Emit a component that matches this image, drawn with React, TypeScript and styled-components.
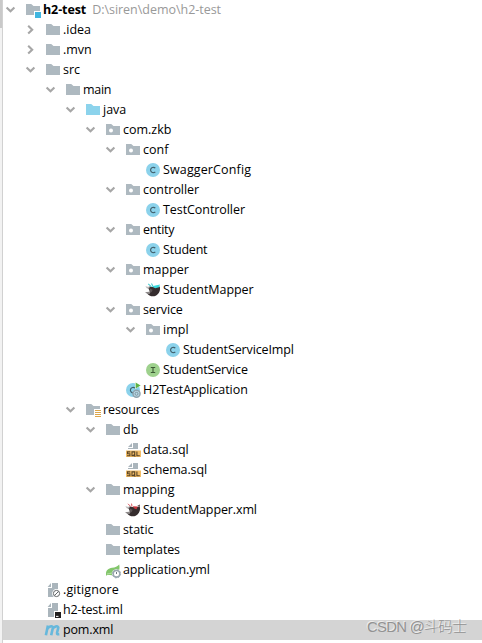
import React from "react";
import styled, { createGlobalStyle } from "styled-components";

const GlobalStyle = createGlobalStyle`
  * { box-sizing: border-box; }
  body { margin: 0; background: #fff; overflow: hidden; }
`;

const Panel = styled.div`
  position: relative;
  display: flex;
  width: 482px;
  height: 643px;
  overflow: hidden;
  background: #fff;
  color: #000;
  font-family: "Open Sans", "Noto Sans CJK SC", sans-serif;
  font-size: 12.5px;
`;

const Gutter = styled.div`
  flex: none;
  width: 3px;
  background: #f2f2f2;
  border-right: 1px solid #d1d1d1;
`;

const GutterThumb = styled.div`
  height: 28px;
  background: #c9c9c9;
`;

const Tree = styled.div`
  flex: 1;
  display: flex;
  flex-direction: column;
`;

const Row = styled.div<{ $depth: number; $selected?: boolean }>`
  display: flex;
  align-items: center;
  flex: none;
  height: 20px;
  padding-left: ${(p) => p.$depth * 20}px;
  background: ${(p) => (p.$selected ? "#d4d4d4" : "transparent")};
`;

const Toggle = styled.span`
  flex: none;
  width: 22px;
  height: 20px;
  svg { display: block; }
`;

const IconBox = styled.span`
  flex: none;
  width: 18px;
  height: 16px;
  svg { display: block; overflow: visible; }
`;

const Label = styled.span<{ $root?: boolean; $tracking: number }>`
  line-height: 20px;
  height: 20px;
  white-space: pre;
  font-weight: ${(p) => (p.$root ? 700 : 400)};
  letter-spacing: ${(p) => p.$tracking}px;
`;

const Path = styled.span`
  margin-left: 6px;
  line-height: 20px;
  height: 20px;
  color: #999;
  white-space: pre;
  letter-spacing: -0.03px;
`;

const Watermark = styled.div`
  position: absolute;
  left: 367px;
  top: 615px;
  line-height: 24px;
  font-family: "Liberation Sans", "Noto Sans CJK SC", sans-serif;
  font-size: 14.8px;
  font-weight: 300;
  letter-spacing: -0.65px;
  white-space: nowrap;
  color: #929292;
  text-shadow: -1px -1px 0 rgba(255, 255, 255, 0.6);
`;

const Chevron = ({ open }: { open: boolean }) => (
  <svg width="22" height="20" fill="none" stroke="#a6a6a6" strokeWidth="2.1">
    <path d={open ? "M3.6 7.4 7.5 11.2 11.4 7.4" : "M5.2 5.8 9.2 9.7 5.2 13.6"} />
  </svg>
);

type Kind =
  | "module" | "folder" | "source" | "package" | "class" | "interface" | "app"
  | "mapper" | "mapperXml" | "resources" | "sql" | "spring" | "ignore" | "iml" | "maven";

const folderShape = "M1 2H6.2L8.5 4H15V13H1Z";

const BirdBody = () => (
  <>
    <path d="M2 5.2 5.2 4.6C8 5.6 11 5.6 14.7 4.6 15.8 8 14.2 12 10.7 13.8 7.2 15.3 3.6 13.5 2 11.4L4.8 10.2C4.8 8.4 4 6.8 2 5.2Z" fill="#352d2e" />
    <path d="M0 10.2 5.8 9.4 4.6 12 2.2 11.8Z" fill="#8c8888" />
    <path d="M.4 4.2 4.8 5.3 4 6.8 1.8 6.3Z" fill="#b9b6b6" />
    <path d="M4.8 6.5 7.6 7.8 6.6 10.3 4.8 9.6Z" fill="#5d5556" />
  </>
);

const Gear = () => (
  <>
    <circle cx="11.5" cy="11.8" r="4.6" fill="#fff" />
    <circle cx="11.5" cy="11.8" r="3.3" fill="none" stroke="#9aa7b0" strokeWidth="1.6" />
    <circle cx="11.5" cy="11.8" r="4.1" fill="none" stroke="#9aa7b0" strokeWidth="1" strokeDasharray="1.6 1.6" />
    <path d="M11.5 10V12" stroke="#6e7a83" />
  </>
);

const PageShape = () => (
  <path d="M7 1H13V15H3V6H7ZM6 1V5H2.6Z" fill="#aab5bc" />
);

const Icon = ({ kind }: { kind: Kind }) => {
  const drawings: Record<Kind, React.ReactNode> = {
    folder: <path d={folderShape} fill="#aeb9c0" />,
    source: <path d={folderShape} fill="#8cd3ec" />,
    module: (
      <>
        <path d={folderShape} fill="#aeb9c0" />
        <path d="M9 9H16V16H9Z" fill="#fff" />
        <path d="M10 10H16V16H10Z" fill="#40b6e0" />
      </>
    ),
    package: (
      <>
        <path d={folderShape} fill="#aeb9c0" />
        <circle cx="6" cy="8.5" r="2" fill="#fff" />
      </>
    ),
    class: (
      <>
        <circle cx="8" cy="8" r="7" fill="#8bd2eb" />
        <path d="M10.3 6.2A2.7 2.7 0 1 0 10.3 9.8" fill="none" stroke="#405f6b" strokeWidth="1.15" />
      </>
    ),
    interface: (
      <>
        <circle cx="8" cy="8" r="7" fill="#9ed18d" />
        <path d="M5.8 5.5H10.2M8 5.5V10.5M5.8 10.5H10.2" stroke="#3c5a34" strokeWidth="1.1" />
      </>
    ),
    app: (
      <>
        <circle cx="8" cy="8" r="7" fill="#8bd2eb" />
        <path d="M10 6.2A2.7 2.7 0 1 0 8.5 10.8" fill="none" stroke="#405f6b" strokeWidth="1.15" />
        <path d="M10 0V7L16 3.6Z" fill="#fff" />
        <path d="M10.6 .6V6.4L15.6 3.5Z" fill="#5fb346" />
        <circle cx="11.5" cy="11.8" r="3.5" fill="#b9dce9" stroke="#8fa2ad" strokeWidth="1.5" />
        <circle cx="11.5" cy="11.8" r="1.5" fill="none" stroke="#7e929d" />
      </>
    ),
    mapper: (
      <>
        <BirdBody />
        <path d="M3.2 1.8 6.3 4.6M6.5 1.6 8 4.4" stroke="#48cdd2" strokeWidth="1.1" />
        <path d="M7 4.2 15 2.4 14 5.2 10.2 6.2Z" fill="#39d9dd" />
      </>
    ),
    mapperXml: (
      <>
        <BirdBody />
        <path d="M3 1.8 5.6 4.4M6.5 1.6 7 4.4" stroke="#dc5960" strokeWidth="1" />
        <path d="M7.8 4.2 12.8 4.4 11.6 7.2 9.6 6.8Z" fill="#c5363c" />
        <path d="M12.3 3.8 15 2.4 14.6 5Z" fill="#564849" />
      </>
    ),
    resources: (
      <>
        <path d="M1 2H6.2L8.5 4H15V7H9V13H1Z" fill="#aeb9c0" />
        <path d="M10 8.5H16M10 10.5H16M10 12.5H16M10 14.5H16" stroke="#dca64b" />
      </>
    ),
    sql: (
      <>
        <path d="M8 1H13V7H3V6H8ZM7 1V5H3Z" fill="#aab5bc" />
        <path d="M1 8.5H16V15H1Z" fill="#f3bd66" />
        <g fill="none" stroke="#594528" strokeWidth="1.1">
          <path d="M5.3 9.9H2.5V11.7H4.9V13.7H2M7 9.9H9.7V13.6H7ZM8.7 12.4 10.3 14.6M11.9 9.5V13.7H14.8" />
        </g>
      </>
    ),
    spring: (
      <>
        <path d="M1 12.5C.8 8 3.5 6.4 7 5.8 10.2 5.3 12.5 4.4 14.2 2.4 15.2 7 14.1 10.8 9.8 12.6 6.5 13.9 3.3 12.4 1 13.7Z" fill="#83c66b" />
        <path d="M2 12C5 11.8 8.2 10.8 11 8" fill="none" stroke="#c6e6ba" strokeWidth=".8" />
        <Gear />
      </>
    ),
    ignore: (
      <>
        <PageShape />
        <circle cx="11.5" cy="11.5" r="4.4" fill="#fff" />
        <circle cx="11.5" cy="11.5" r="3.1" fill="none" stroke="#626567" />
        <path d="M9.4 13.6 13.6 9.4" stroke="#626567" />
      </>
    ),
    iml: (
      <>
        <PageShape />
        <path d="M9 9H16V16H9Z" fill="#fff" />
        <path d="M10 10H16V16H10Z" fill="#211f20" />
        <path d="M11 14.4H13.5" stroke="#fff" />
      </>
    ),
    maven: (
      <path
        d="M.9 13.2 2.9 3.4M2.2 7.2C3.2 4.6 7.6 3 7.9 5.6L6.2 13.2M7.4 7.2C8.6 4.6 13.2 3 13.3 5.6L12 11C11.8 12.4 12.9 12.4 14.3 12.2"
        fill="none" stroke="#66b8dc" strokeWidth="2.6"
      />
    ),
  };
  return <svg width="16" height="16" viewBox="0 0 16 16">{drawings[kind]}</svg>;
};

interface Node {
  name: string;
  depth: number;
  kind: Kind;
  open?: boolean;
  path?: string;
  selected?: boolean;
  tracking?: number;
}

const nodes: Node[] = [
  { name: "h2-test", depth: 0, kind: "module", open: true, path: "D:\\siren\\demo\\h2-test", tracking: -0.1 },
  { name: ".idea", depth: 1, kind: "folder", open: false },
  { name: ".mvn", depth: 1, kind: "folder", open: false },
  { name: "src", depth: 1, kind: "folder", open: true },
  { name: "main", depth: 2, kind: "folder", open: true, tracking: -0.3 },
  { name: "java", depth: 3, kind: "source", open: true },
  { name: "com.zkb", depth: 4, kind: "package", open: true },
  { name: "conf", depth: 5, kind: "package", open: true },
  { name: "SwaggerConfig", depth: 6, kind: "class", tracking: 0.13 },
  { name: "controller", depth: 5, kind: "package", open: true, tracking: -0.07 },
  { name: "TestController", depth: 6, kind: "class", tracking: -0.07 },
  { name: "entity", depth: 5, kind: "package", open: true, tracking: -0.3 },
  { name: "Student", depth: 6, kind: "class", tracking: -0.2 },
  { name: "mapper", depth: 5, kind: "package", open: true },
  { name: "StudentMapper", depth: 6, kind: "mapper", tracking: -0.06 },
  { name: "service", depth: 5, kind: "package", open: true, tracking: -0.1 },
  { name: "impl", depth: 6, kind: "package", open: true },
  { name: "StudentServiceImpl", depth: 7, kind: "class", tracking: -0.12 },
  { name: "StudentService", depth: 6, kind: "interface", tracking: -0.17 },
  { name: "H2TestApplication", depth: 5, kind: "app", tracking: -0.07 },
  { name: "resources", depth: 3, kind: "resources", open: true, tracking: -0.1 },
  { name: "db", depth: 4, kind: "folder", open: true },
  { name: "data.sql", depth: 5, kind: "sql", tracking: -0.06 },
  { name: "schema.sql", depth: 5, kind: "sql", tracking: -0.12 },
  { name: "mapping", depth: 4, kind: "folder", open: true },
  { name: "StudentMapper.xml", depth: 5, kind: "mapperXml", tracking: -0.12 },
  { name: "static", depth: 4, kind: "folder", tracking: -0.1 },
  { name: "templates", depth: 4, kind: "folder", tracking: -0.15 },
  { name: "application.yml", depth: 4, kind: "spring", tracking: -0.12 },
  { name: ".gitignore", depth: 1, kind: "ignore", tracking: 0.1 },
  { name: "h2-test.iml", depth: 1, kind: "iml", tracking: -0.2 },
  { name: "pom.xml", depth: 1, kind: "maven", selected: true, tracking: -0.15 },
];

export default function App() {
  return (
    <>
      <GlobalStyle />
      <Panel>
        <Gutter><GutterThumb /></Gutter>
        <Tree>
          {nodes.map((node, index) => (
            <Row key={index} $depth={node.depth} $selected={node.selected}>
              <Toggle>{node.open !== undefined && <Chevron open={node.open} />}</Toggle>
              <IconBox><Icon kind={node.kind} /></IconBox>
              <Label $root={node.depth === 0} $tracking={node.tracking ?? 0}>{node.name}</Label>
              {node.path && <Path>{node.path}</Path>}
            </Row>
          ))}
        </Tree>
        <Watermark>CSDN @斗码士</Watermark>
      </Panel>
    </>
  );
}
